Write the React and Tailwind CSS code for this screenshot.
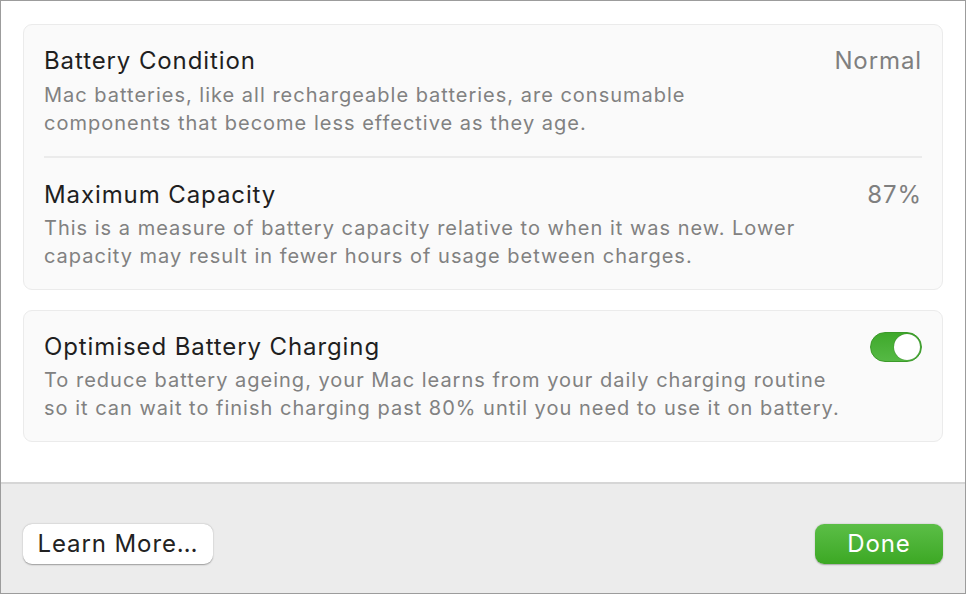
export default function App() {
  const font = { fontFamily: 'Inter, "Noto Sans", sans-serif' };
  return (
    <div className="w-[966px] h-[594px] bg-white border border-[#9c9c9c] flex flex-col overflow-hidden" style={font}>
      <div className="flex-1 flex flex-col gap-[20px] px-[22px] pt-[23px]">
        <div className="rounded-[9px] border border-[#ebebeb] bg-[#fafafa] px-[20px] pt-[21px] pb-[19px]">
          <div className="flex justify-between items-start">
            <div className="text-[24px] leading-[30px] text-[#1f1f1f] tracking-[0.9px]">Battery Condition</div>
            <div className="text-[24px] leading-[30px] text-[#7f7f7f] tracking-[0.9px]">Normal</div>
          </div>
          <div className="mt-[5px] text-[20px] leading-[28px] text-[#818181] tracking-[1px] w-[700px]">
            Mac batteries, like all rechargeable batteries, are consumable components that become less effective as they age.
          </div>
          <div className="h-[2px] bg-[#ebebeb] mt-[19px] mb-[22px]" />
          <div className="flex justify-between items-start">
            <div className="text-[24px] leading-[30px] text-[#1f1f1f] tracking-[0.9px]">Maximum Capacity</div>
            <div className="text-[24px] leading-[30px] text-[#7f7f7f] tracking-[0.9px]">87%</div>
          </div>
          <div className="mt-[4px] text-[20px] leading-[28px] text-[#818181] tracking-[1px] w-[800px]">
            This is a measure of battery capacity relative to when it was new. Lower capacity may result in fewer hours of usage between charges.
          </div>
        </div>
        <div className="rounded-[9px] border border-[#ebebeb] bg-[#fafafa] px-[20px] pt-[21px] pb-[19px]">
          <div className="flex justify-between items-start">
            <div className="text-[24px] leading-[30px] text-[#1f1f1f] tracking-[0.9px]">Optimised Battery Charging</div>
            <div className="w-[52px] h-[30px] rounded-full bg-gradient-to-b from-[#3fa92b] to-[#55b944] border border-[#3c9a2a] flex items-center justify-end pr-[1px]">
              <div className="w-[26px] h-[26px] rounded-full bg-white shadow-[0_0_1px_rgba(0,0,0,0.4)]" />
            </div>
          </div>
          <div className="mt-[4px] text-[20px] leading-[28px] text-[#818181] tracking-[1px] w-[805px]">
            To reduce battery ageing, your Mac learns from your daily charging routine so it can wait to finish charging past 80% until you need to use it on battery.
          </div>
        </div>
      </div>
      <div className="h-[111px] shrink-0 bg-[#ececec] border-t-2 border-[#d6d6d6] flex items-start justify-between px-[22px] pt-[40px]">
        <button className="h-[40px] w-[190px] rounded-[9px] bg-white shadow-[0_0.5px_1.5px_rgba(0,0,0,0.35)] text-[24px] text-[#222] tracking-[0.9px] flex items-center justify-center" style={font}>
          Learn More…
        </button>
        <button className="h-[40px] w-[128px] rounded-[9px] bg-gradient-to-b from-[#5bbe46] to-[#3ca823] shadow-[0_0.5px_1.5px_rgba(0,0,0,0.3)] text-[24px] text-white tracking-[0.9px] flex items-center justify-center" style={font}>
          Done
        </button>
      </div>
    </div>
  );
}
